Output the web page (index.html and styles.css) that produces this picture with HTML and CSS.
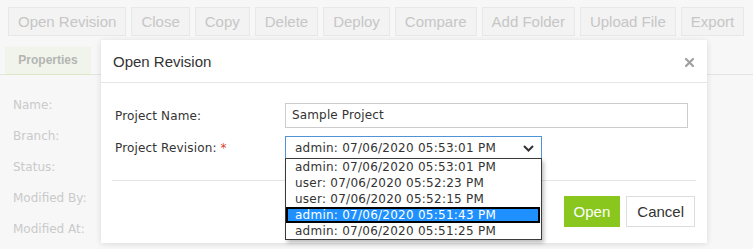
FILE: index.html
```html
<!DOCTYPE html>
<html lang="en">
<head>
    <meta charset="UTF-8">
    <meta name="viewport" content="width=device-width, initial-scale=1.0">
    <title>Open Revision</title>
    <link rel="stylesheet" href="styles.css">
</head>
<body>
    <div class="toolbar">
        <button class="tool-btn">Open Revision</button>
        <button class="tool-btn">Close</button>
        <button class="tool-btn">Copy</button>
        <button class="tool-btn">Delete</button>
        <button class="tool-btn">Deploy</button>
        <button class="tool-btn">Compare</button>
        <button class="tool-btn">Add Folder</button>
        <button class="tool-btn">Upload File</button>
        <button class="tool-btn">Export</button>
    </div>

    <div class="tabs">
        <div class="tab">Properties</div>
    </div>

    <div class="props">
        <div class="prop-label">Name:</div>
        <div class="prop-label">Branch:</div>
        <div class="prop-label">Status:</div>
        <div class="prop-label">Modified By:</div>
        <div class="prop-label">Modified At:</div>
    </div>

    <!-- modal dialog -->
    <div class="modal">
        <div class="modal-header">
            <span class="modal-title">Open Revision</span>
            <span class="modal-close">
                <svg width="9" height="9" viewBox="0 0 9 9">
                    <path d="M1 1 L8 8 M8 1 L1 8" stroke="#a0a0a0" stroke-width="2.2" stroke-linecap="square"/>
                </svg>
            </span>
        </div>
        <div class="modal-body">
            <div class="form">
                <label class="form-label">Project Name:</label>
                <div class="text-input">Sample Project</div>

                <label class="form-label">Project Revision: <span class="required">*</span></label>
                <div class="select-wrap">
                    <div class="select">
                        <span>admin: 07/06/2020 05:53:01 PM</span>
                        <svg width="11" height="7" viewBox="0 0 11 7">
                            <path d="M1 1 L5.5 5.5 L10 1" fill="none" stroke="#333" stroke-width="2"/>
                        </svg>
                    </div>
                    <ul class="options">
                        <li>admin: 07/06/2020 05:53:01 PM</li>
                        <li>user: 07/06/2020 05:52:23 PM</li>
                        <li>user: 07/06/2020 05:52:15 PM</li>
                        <li class="selected">admin: 07/06/2020 05:51:43 PM</li>
                        <li>admin: 07/06/2020 05:51:25 PM</li>
                    </ul>
                </div>
            </div>
            <div class="divider"></div>
            <div class="modal-footer">
                <button class="btn btn-open">Open</button>
                <button class="btn btn-cancel">Cancel</button>
            </div>
        </div>
    </div>
</body>
</html>
```

FILE: styles.css
```css
body {
    margin: 0;
    width: 753px;
    height: 249px;
    overflow: hidden;
    background-color: #f7f7f7;
    font-family: "Liberation Sans", Arial, sans-serif;
    position: relative;
}
.toolbar {
    display: flex;
    gap: 5px;
    padding: 7px 8px 0 8px;
}
.tool-btn {
    height: 29px;
    padding: 0 9px;
    border: 1px solid #e8e8e8;
    background-color: #f3f3f3;
    color: #c6c6c6;
    font-family: "Liberation Sans", Arial, sans-serif;
    font-size: 15px;
}
.tabs {
    margin-top: 11px;
    padding-left: 5px;
    border-bottom: 1px solid #e4e4e4;
    display: flex;
}
.tab {
    width: 86px;
    height: 27px;
    line-height: 27px;
    text-align: center;
    background-color: #f1f4ea;
    border-bottom: 1px solid #dce8c6;
    margin-bottom: -1px;
    color: #b4b4b4;
    font-weight: bold;
    font-size: 12px;
}
.props {
    padding: 15px 0 0 13px;
    font-family: "DejaVu Sans", Verdana, sans-serif;
    font-size: 12px;
    color: #cacaca;
}
.prop-label {
    height: 31px;
    line-height: 31px;
}
.modal {
    position: absolute;
    left: 101px;
    top: 40px;
    width: 606px;
    height: 203px;
    background-color: #fff;
    box-shadow: 0 1px 6px rgba(0, 0, 0, 0.12);
}
.modal-header {
    height: 42px;
    border-bottom: 1px solid #e5e5e5;
    display: flex;
    align-items: center;
    justify-content: space-between;
    padding: 0 13px 0 12px;
}
.modal-title {
    font-size: 15px;
    color: #333;
}
.modal-close {
    display: flex;
    margin-top: 2px;
}
.modal-body {
    padding: 20px 11px 0 11px;
}
.form {
    display: grid;
    grid-template-columns: 170px 1fr;
    grid-template-rows: 25px 24px;
    row-gap: 8px;
    align-items: center;
    padding: 0 8px 0 3px;
    font-family: "DejaVu Sans", Verdana, sans-serif;
    font-size: 12px;
    letter-spacing: 0.15px;
    color: #333;
}
.required {
    color: #e2402f;
}
.text-input {
    height: 25px;
    box-sizing: border-box;
    border: 1px solid #cccccc;
    line-height: 23px;
    padding-left: 6px;
}
.select-wrap {
    position: relative;
    width: 257px;
}
.select {
    height: 24px;
    box-sizing: border-box;
    border: 1px solid #4f94d6;
    display: flex;
    align-items: center;
    justify-content: space-between;
    padding: 0 7px 0 9px;
    letter-spacing: 0.25px;
}
.options {
    position: absolute;
    left: 0;
    top: 22px;
    width: 257px;
    box-sizing: border-box;
    margin: 0;
    padding: 0;
    list-style: none;
    background-color: #fff;
    border: 1px solid #3a3a3a;
    box-shadow: 2px 3px 4px rgba(0, 0, 0, 0.25);
    letter-spacing: 0.25px;
}
.options li {
    height: 16px;
    line-height: 16px;
    padding-left: 9px;
    white-space: nowrap;
}
.options li.selected {
    background-color: #1e90ff;
    color: #fff;
    box-shadow: inset 0 0 0 2px #000;
    margin-right: 1px;
}
.divider {
    height: 1px;
    background-color: #e5e5e5;
    margin: 20px 0 15px 0;
}
.modal-footer {
    display: flex;
    justify-content: flex-end;
    gap: 6px;
    padding-right: 1px;
}
.btn {
    height: 31px;
    padding: 0 10px;
    font-family: "Liberation Sans", Arial, sans-serif;
    font-size: 15px;
    cursor: pointer;
}
.btn-open {
    background-color: #89c71f;
    color: #fff;
    border: none;
}
.btn-cancel {
    background-color: #fff;
    color: #333;
    border: 1px solid #dddddd;
}
```
